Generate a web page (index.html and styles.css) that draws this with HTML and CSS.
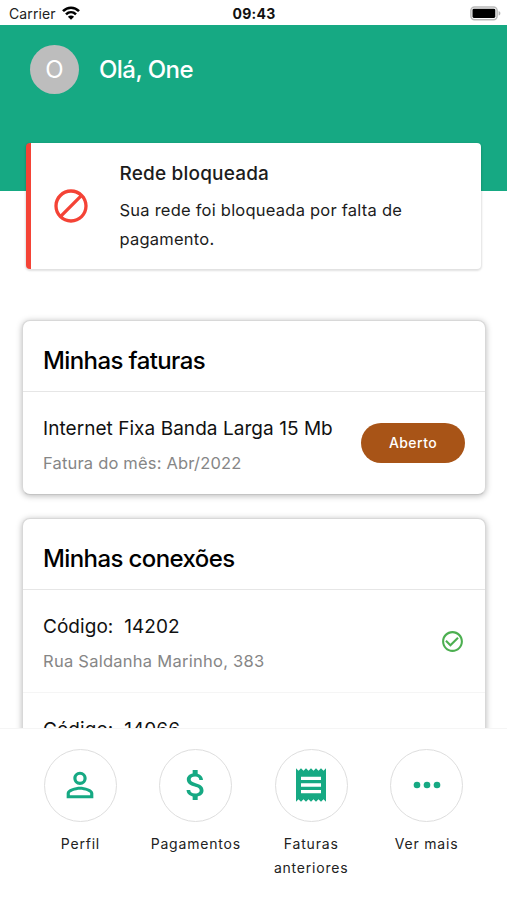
FILE: index.html
```html
<!DOCTYPE html>
<html lang="pt-BR">
<head>
<meta charset="utf-8">
<meta name="viewport" content="width=device-width, initial-scale=1">
<title>Início</title>
<link rel="stylesheet" href="styles.css">
</head>
<body>
<div class="screen">
  <div class="status">
    <div class="carrier"><span class="carrier-name">Carrier</span>
      <svg class="wifi" viewBox="0 0 18 14"><g fill="none" stroke="#000" stroke-width="2.6"><path d="M1 5.2C5.6.5 12.4.5 17 5.2"/><path d="M4 8.4c2.9-2.8 7.1-2.8 10 0"/></g><path d="M9 13.8 5.9 10.7c1.8-1.7 4.4-1.7 6.2 0z"/></svg>
    </div>
    <span class="clock">09:43</span>
    <svg class="battery" viewBox="0 0 31 15"><rect x=".9" y=".9" width="26.2" height="12.8" rx="3.6" fill="#fff" stroke="#b9b9b9" stroke-width="1.5"/><rect x="2.5" y="2.7" width="22.8" height="9.2" rx="1.4"/><path d="M28.6 5c2.4.8 2.4 3.8 0 4.6z" fill="#b5b5b5"/></svg>
  </div>
  <main class="content">
    <header class="header">
      <div class="avatar">O</div>
      <h1 class="hello">Olá, One</h1>
    </header>
    <section class="alert">
      <svg class="block" viewBox="0 0 24 24"><path d="M12 2C6.480 2 2 6.480 2 12s4.480 10 10 10 10-4.480 10-10S17.520 2 12 2zM4 12c0-4.420 3.580-8 8-8 1.850 0 3.550.63 4.900 1.690L5.690 16.900C4.630 15.550 4 13.850 4 12zm8 8c-1.850 0-3.550-.63-4.900-1.690L18.310 7.100C19.370 8.450 20 10.150 20 12c0 4.420-3.580 8-8 8z"/></svg>
      <div class="alert-text">
        <h2 class="alert-title">Rede bloqueada</h2>
        <p class="alert-message">Sua rede foi bloqueada por falta de pagamento.</p>
      </div>
    </section>
    <section class="card">
      <h2 class="card-title">Minhas faturas</h2>
      <div class="row">
        <div>
          <p class="name">Internet Fixa Banda Larga 15 Mb</p>
          <p class="detail detail-month">Fatura do mês: Abr/2022</p>
        </div>
        <span class="badge">Aberto</span>
      </div>
    </section>
    <section class="card">
      <h2 class="card-title">Minhas conexões</h2>
      <div class="row">
        <div>
          <p class="name">Código:&nbsp; 14202</p>
          <p class="detail">Rua Saldanha Marinho, 383</p>
        </div>
        <svg class="check" viewBox="0 0 24 24"><path d="M16.590 7.580 10 14.170l-3.590-3.580L5 12l5 5 8-8zM12 2C6.480 2 2 6.480 2 12s4.480 10 10 10 10-4.480 10-10S17.520 2 12 2zm0 18c-4.420 0-8-3.580-8-8s3.580-8 8-8 8 3.580 8 8-3.580 8-8 8z"/></svg>
      </div>
      <div class="row">
        <p class="name">Código:&nbsp; 14066</p>
      </div>
    </section>
  </main>
  <nav class="tabs">
    <a class="tab"><span class="circle"><svg viewBox="0 0 24 24"><path d="M12 5.900a2.100 2.100 0 1 1 0 4.200 2.100 2.100 0 0 1 0-4.200m0 9c2.970 0 6.100 1.460 6.100 2.100v1.100H5.900V17c0-.64 3.130-2.100 6.100-2.100M12 4C9.790 4 8 5.790 8 8s1.790 4 4 4 4-1.790 4-4-1.790-4-4-4zm0 9c-2.670 0-8 1.340-8 4v3h16v-3c0-2.660-5.330-4-8-4z"/></svg></span><span>Perfil</span></a>
    <a class="tab"><span class="circle"><svg viewBox="0 0 24 24"><path d="M11.800 10.900c-2.270-.59-3-1.200-3-2.150 0-1.090 1.010-1.850 2.700-1.850 1.780 0 2.440.85 2.500 2.100h2.210c-.07-1.720-1.120-3.300-3.210-3.810V3h-3v2.160c-1.940.42-3.500 1.680-3.500 3.610 0 2.310 1.910 3.460 4.700 4.130 2.500.6 3 1.480 3 2.410 0 .69-.49 1.790-2.700 1.790-2.060 0-2.870-.92-2.980-2.100h-2.200c.12 2.190 1.760 3.420 3.680 3.830V21h3v-2.150c1.950-.37 3.500-1.500 3.500-3.550 0-2.840-2.430-3.810-4.700-4.400z"/></svg></span><span>Pagamentos</span></a>
    <a class="tab"><span class="circle"><svg viewBox="0 0 24 24"><path d="M18 17H6v-2h12v2zm0-4H6v-2h12v2zm0-4H6V7h12v2zM3 22l1.500-1.500L6 22l1.500-1.500L9 22l1.500-1.500L12 22l1.500-1.500L15 22l1.500-1.500L18 22l1.500-1.500L21 22V2l-1.500 1.500L18 2l-1.500 1.500L15 2l-1.500 1.500L12 2l-1.500 1.500L9 2 7.500 3.500 6 2 4.500 3.500 3 2v20z"/></svg></span><span>Faturas anteriores</span></a>
    <a class="tab"><span class="circle"><svg viewBox="0 0 24 24"><circle cx="6" cy="12" r="2"/><circle cx="12" cy="12" r="2"/><circle cx="18" cy="12" r="2"/></svg></span><span>Ver mais</span></a>
  </nav>
</div>
</body>
</html>
```
FILE: styles.css
```css
* { box-sizing: border-box; }
body { margin: 0; background: #fff; font-family: Inter, "Liberation Sans", sans-serif; color: #000; }
h1, h2, p { margin: 0; font-weight: 400; }
.screen { height: 900px; display: flex; flex-direction: column; overflow: hidden; }

.status { height: 25px; flex: none; display: grid; grid-template-columns: 1fr auto 1fr; align-items: center; padding: 2px 6px 0 9px; }
.carrier { display: flex; align-items: center; gap: 6px; font-size: 14px; letter-spacing: .1px; color: #222; }
.wifi { width: 18px; height: 14px; margin-top: -2px; }
.clock { font-size: 14px; font-weight: 700; letter-spacing: .3px; margin-left: -2px; color: #111; }
.battery { width: 31px; height: 15px; justify-self: end; margin-top: -1px; }

.content { flex: 1; min-height: 0; overflow: hidden; }
.header { height: 166px; background: #16a983; display: flex; align-items: flex-start; gap: 20px; padding: 20px 30px; color: #fff; }
.avatar { width: 49px; height: 49px; border-radius: 50%; background: #bdbdbd; font-size: 24px; line-height: 50px; text-align: center; }
.hello { font-size: 24px; line-height: 50px; font-weight: 450; letter-spacing: -.55px; }

.alert { height: 126px; margin: -48px 26px 0; display: flex; background: #fff; border-left: 5px solid #f44336; border-radius: 4px; box-shadow: 0 1px 2px 1px rgba(0, 0, 0, .12); padding: 14px 20px 0 19.5px; }
.block { width: 40px; height: 40px; margin-top: 29px; fill: #f44336; flex: none; }
.alert-text { margin-left: 29px; color: #1c1c1c; }
.alert-title { font-size: 19px; line-height: 33px; font-weight: 450; letter-spacing: .18px; }
.alert-message { width: 310px; margin-top: 6px; font-size: 16.5px; line-height: 29px; letter-spacing: .23px; }

.card { margin: 51px 21px 0 22px; border: 1px solid #d8d8d8; border-bottom-color: #c4c4c4; border-radius: 8px; background: #fff; box-shadow: 0 1px 6px rgba(0, 0, 0, .28); }
.card + .card { margin-top: 23px; }
.card-title { height: 71px; padding: 5px 20px 0; font-size: 24px; line-height: 70px; font-weight: 450; letter-spacing: -.6px; border-bottom: 1px solid #e6e6e6; }
.row { height: 102px; display: flex; justify-content: space-between; padding: 20px 20px 0; }
.row + .row { border-top: 1px solid #f5f5f5; }
.name { font-size: 19px; line-height: 33px; letter-spacing: .05px; color: #111; white-space: nowrap; }
.detail { margin-top: 4px; font-size: 16.5px; line-height: 28px; color: #868686; letter-spacing: .26px; }
.detail-month { letter-spacing: .18px; }
.badge { width: 104px; height: 40px; margin-top: 11px; border-radius: 20px; background: #a85417; color: #fff; font-size: 14px; line-height: 40px; font-weight: 500; letter-spacing: .45px; text-align: center; }
.check { width: 25px; height: 25px; margin-top: 18.5px; fill: #4caf50; }

.tabs { position: relative; height: 172px; flex: none; display: grid; grid-template-columns: repeat(4, 115.4px); justify-content: center; border-top: 1px solid #f5f5f5; padding-top: 19.5px; background: #fff; }
.tab { display: flex; flex-direction: column; align-items: center; text-align: center; font-size: 14px; line-height: 24px; letter-spacing: .8px; color: #222; }
.circle { width: 73px; height: 73px; margin-bottom: 10.5px; border: 1px solid #dedede; border-radius: 50%; display: grid; place-items: center; }
.circle svg { width: 40px; height: 40px; margin-top: -1px; fill: #16a983; }
```
